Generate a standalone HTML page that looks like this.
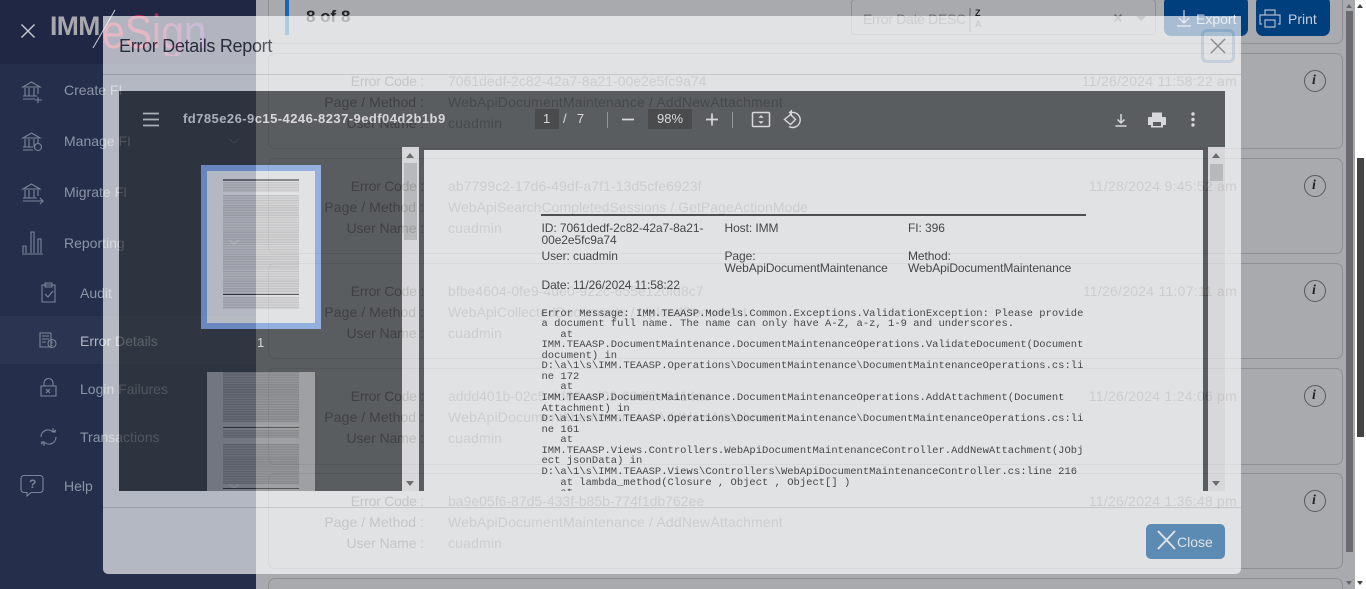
<!DOCTYPE html>
<html><head><meta charset="utf-8"><style>
*{box-sizing:border-box}
html,body{margin:0;padding:0;width:1366px;height:589px;overflow:hidden;background:#fff;font-family:"Liberation Sans",sans-serif}
#root{position:absolute;left:0;top:0;width:1366px;height:589px;overflow:hidden;background:#fff}
.a{position:absolute;white-space:nowrap}
#main{position:absolute;left:256px;top:0;width:1099px;height:589px;background:#a9aaae}
#side{position:absolute;left:0;top:0;width:256px;height:589px;background:#252f4c}
.card{position:absolute;left:268px;width:1075px;border:1px solid #8f9095;border-radius:7px;background:#a9aaae}
.st{font-size:14px;color:#8d94a6;line-height:16px}
.lb,.vl,.tm{position:absolute;font-size:14px;line-height:16px;white-space:nowrap}
.lb{right:942px;color:#56565a;text-align:right;letter-spacing:.05px}
.lb.e{letter-spacing:-.25px}
.lb.u{letter-spacing:-.1px}
.vl{left:448px;color:#6e6e72;letter-spacing:.17px}
.tm{right:129px;color:#6e6e72;letter-spacing:.25px}
#modal{position:absolute;left:103px;top:16px;width:1138px;height:558px;background:#fff;opacity:.66;border-radius:0 0 5px 5px;overflow:hidden}
#viewer{position:absolute;left:16px;top:75px;width:1106px;height:400px;background:#323639;overflow:hidden}
.tb{color:#f1f1f1;font-size:13px;line-height:16px;position:absolute;white-space:nowrap}
.sb{position:absolute;background:#f1f1f1;top:56px;width:17px;height:344px}
.sb i{position:absolute;left:2px;width:13px;background:#c1c1c1}
.up{position:absolute;left:4px;top:6px;width:0;height:0;border:4px solid transparent;border-top:0;border-bottom:5px solid #505050}
.dn{position:absolute;left:4px;bottom:5px;width:0;height:0;border:4px solid transparent;border-bottom:0;border-top:5px solid #505050}
.pg{position:absolute;background:#fff;left:305px;top:59px;width:779px;height:341px;overflow:hidden;color:#000}
.pgi{position:absolute;left:0;top:0;width:779px;height:341px;filter:blur(.3px)}
.hd{position:absolute;font-size:12px;line-height:11.5px;white-space:nowrap;color:#111;letter-spacing:-.08px}
pre{position:absolute;left:117.5px;top:158.500px;margin:0;font:10.5px/10.56px "Liberation Mono",monospace;color:#111}
.th{position:absolute;background:#fff;width:108px;height:152px;overflow:hidden}
.ln{position:absolute;left:16px;width:76px;background:repeating-linear-gradient(#d2d2d2 0 1.2px,#ececec 1.2px 2.45px)}
.ln.d{background:repeating-linear-gradient(#bbb 0 1.2px,#dedede 1.2px 2.45px)}
.rl{position:absolute;left:16px;width:76px;height:1px;background:#555}
svg{position:absolute;overflow:visible;fill:none}
</style></head><body><div id="root">
<div id="main"></div>
<div id="side"><div style="position:absolute;left:0;top:0;width:256px;height:64px;background:#1f2745"></div>
<div style="position:absolute;left:0;top:316px;width:256px;height:48px;background:#2b3551"></div></div>

<svg style="left:0;top:0" width="256" height="589" stroke="#7c8598" stroke-width="1.1">
<path d="M21.5 24.5l13 13M34.5 24.5l-13 13" stroke="#c9ccd4" stroke-width="1.4"/>
<path d="M23 87h17l-8.500-5zM25 88v8M29 88v8M34 88v8M38 88v6M23 96h14M23 99h12"/>
<path d="M38 97v6M35 100h7"/>
<path d="M23 138h17l-8.500-5zM25 139v8M29 139v8M34 139v8M38 139v4M23 147h10M23 150h10"/><circle cx="38" cy="147" r="3.500"/>
<path d="M23 189h17l-8.500-5zM25 190v8M29 190v8M34 190v8M38 190v6M23 198h14M23 201h14M37 201h6M40 198l3 3-3 3"/>
<path d="M22 254h21M23 253v-7h3v7M31 253v-21h3v21M38 253v-14h3v14"/>
<path d="M42 285h13v17H42zM45 283h7v4h-7zM45 294l3 3 5-6"/>
<path d="M40 333h11v14H40zM42 336h7M42 339h7M42 342h4"/><circle cx="52" cy="343.500" r="4"/><path d="M52 341.500v2M52 345v1"/>
<path d="M41 386h15v10H41zM44 386v-3a4.500 4.500 0 0 1 9 0v3M46 389l4 4M50 389l-4 4"/>
<path d="M41 437a7 7 0 0 1 12-5l3-2M56 437a7 7 0 0 1-12 5l-3 2M53 428v4h3M44 446v-4h-3"/>
<path d="M24 475.500h16a3 3 0 0 1 3 3v11a3 3 0 0 1-3 3H31l-4 3.500v-3.500h-3a3 3 0 0 1-3-3v-11a3 3 0 0 1 3-3z"/>
<path d="M229 139l5 4 5-4M229 240l5 4 5-4" stroke="#566079"/>
<path d="M93 48l22-38" stroke="#c9ccd4" stroke-width="1"/>
<path d="M229 484l5 4 5-4" stroke="#566079"/>
</svg>
<div class="a" style="left:29px;top:477px;font-size:12px;line-height:14px;font-weight:bold;color:#7c8598">?</div>
<div class="a" style="left:50px;top:10px;font-size:26.500px;font-weight:bold;line-height:32px;color:#a9a9ad;letter-spacing:-.6px">IMM</div>
<div class="a" style="left:102px;top:7.500px;font-size:47px;line-height:48px;transform:scaleX(.87);transform-origin:left top;background:linear-gradient(90deg,#b02c4c 0,#b02c4c 40%,#5a3c90 100%);-webkit-background-clip:text;background-clip:text;color:transparent">eSign</div>

<div class="a st" style="left:64px;top:82px">Create FI</div>
<div class="a st" style="left:64px;top:133px">Manage FI</div>
<div class="a st" style="left:64px;top:184px">Migrate FI</div>
<div class="a st" style="left:64px;top:235px">Reporting</div>
<div class="a st" style="left:80px;top:285px">Audit</div>
<div class="a st" style="left:80px;top:333px;color:#b3b7c4">Error Details</div>
<div class="a st" style="left:80px;top:381px">Login Failures</div>
<div class="a st" style="left:80px;top:429px">Transactions</div>
<div class="a st" style="left:64px;top:478px">Help</div>

<!-- toolbar -->
<div class="card" style="top:-8px;height:52px"></div>
<div class="a" style="left:285px;top:0;width:4px;height:35px;background:#1f62b5"></div>
<div class="a" style="left:306px;top:7px;font-size:17px;line-height:20px;font-weight:bold;color:#232326">8 of 8</div>
<div class="a" style="left:851px;top:-1px;width:305px;height:36px;border:1px solid #8f9095;border-radius:4px"></div>
<div class="a" style="left:863px;top:11px;font-size:14px;line-height:16px;color:#6e6e72;letter-spacing:-.3px">Error Date DESC</div>
<svg style="left:960px;top:5px" width="40" height="28" stroke="#6a6a6e"><path d="M10 3v24"/></svg>
<div class="a" style="left:975px;top:8px;font-size:9px;line-height:10px;color:#222;font-weight:bold">Z</div>
<div class="a" style="left:975px;top:19px;font-size:9px;line-height:10px;color:#666;font-weight:bold">A</div>
<svg style="left:1112px;top:12px" width="40" height="14" stroke="#66666a" stroke-width="1.6"><path d="M2.500 2.500l7 7M9.500 2.500l-7 7"/><path d="M24 4h10l-5 5z" fill="#66666a" stroke="none"/></svg>
<div class="a" style="left:1164px;top:-4px;width:84px;height:40px;background:#003f7d;border-radius:7px"></div>
<div class="a" style="left:1256px;top:-4px;width:74px;height:40px;background:#003f7d;border-radius:7px"></div>
<div class="a" style="left:1196px;top:11px;font-size:14px;line-height:16px;color:#c6cedb">Export</div>
<div class="a" style="left:1288px;top:11px;font-size:14px;line-height:16px;color:#c6cedb">Print</div>
<svg style="left:1176px;top:9px" width="170" height="20" stroke="#c6cedb" stroke-width="1.200">
<path d="M8 1v13M3 9l5 5 5-5M1 17h14"/>
<path d="M89 6V1h10v5M86 15h-2V6h20v9h-2M89 11h10v7H89z" stroke="#aebbd0"/>
</svg>

<!-- cards -->
<div class="card" style="top:53px;height:96px"></div>
<div class="card" style="top:158px;height:96px"></div>
<div class="card" style="top:263px;height:96px"></div>
<div class="card" style="top:368px;height:97px"></div>
<div class="card" style="top:473px;height:96px"></div>
<div class="card" style="top:578px;height:30px"></div>

<div class="lb e" style="top:73px">Error Code :</div><div class="lb" style="top:94px">Page / Method :</div><div class="lb u" style="top:115px">User Name :</div>
<div class="vl" style="top:73px;letter-spacing:0">7061dedf-2c82-42a7-8a21-00e2e5fc9a74</div><div class="vl" style="top:94px">WebApiDocumentMaintenance / AddNewAttachment</div><div class="vl" style="top:115px">cuadmin</div>
<div class="tm" style="top:73px">11/26/2024 11:58:22 am</div>

<div class="lb e" style="top:178px">Error Code :</div><div class="lb" style="top:199px">Page / Method :</div><div class="lb u" style="top:220px">User Name :</div>
<div class="vl" style="top:178px;letter-spacing:.08px">ab7799c2-17d6-49df-a7f1-13d5cfe6923f</div><div class="vl" style="top:199px;letter-spacing:.03px">WebApiSearchCompletedSessions / GetPageActionMode</div><div class="vl" style="top:220px">cuadmin</div>
<div class="tm" style="top:178px">11/28/2024 9:45:52 am</div>

<div class="lb e" style="top:283px">Error Code :</div><div class="lb" style="top:304px">Page / Method :</div><div class="lb u" style="top:325px">User Name :</div>
<div class="vl" style="top:283px;letter-spacing:.03px">bfbe4604-0fe9-4de0-922c-655e120fd8c7</div><div class="vl" style="top:304px;letter-spacing:.03px">WebApiCollectedDocuments / UploadDocument</div><div class="vl" style="top:325px">cuadmin</div>
<div class="tm" style="top:283px">11/26/2024 11:07:11 am</div>

<div class="lb e" style="top:388px">Error Code :</div><div class="lb" style="top:409px">Page / Method :</div><div class="lb u" style="top:430px">User Name :</div>
<div class="vl" style="top:388px;letter-spacing:0">addd401b-02c5-4d68-ad02-68df2e6a14ae</div><div class="vl" style="top:409px">WebApiDocumentMaintenance / AddNewAttachment</div><div class="vl" style="top:430px">cuadmin</div>
<div class="tm" style="top:388px">11/26/2024 1:24:06 pm</div>

<div class="lb e" style="top:493px">Error Code :</div><div class="lb" style="top:514px">Page / Method :</div><div class="lb u" style="top:535px">User Name :</div>
<div class="vl" style="top:493px;letter-spacing:0">ba9e05f6-87d5-433f-b85b-774f1db762ee</div><div class="vl" style="top:514px">WebApiDocumentMaintenance / AddNewAttachment</div><div class="vl" style="top:535px">cuadmin</div>
<div class="tm" style="top:493px">11/26/2024 1:36:48 pm</div>

<svg style="left:1300px;top:60px" width="30" height="480" stroke="#5a5a5e" stroke-width="1">
<circle cx="15" cy="21" r="10.500"/><circle cx="15" cy="126" r="10.500"/><circle cx="15" cy="231" r="10.500"/><circle cx="15" cy="336" r="10.500"/><circle cx="15" cy="441" r="10.500"/>
</svg>
<div class="a" style="left:1312px;top:73px;font:italic bold 14px/16px 'Liberation Serif',serif;color:#222">i</div>
<div class="a" style="left:1312px;top:178px;font:italic bold 14px/16px 'Liberation Serif',serif;color:#222">i</div>
<div class="a" style="left:1312px;top:283px;font:italic bold 14px/16px 'Liberation Serif',serif;color:#222">i</div>
<div class="a" style="left:1312px;top:388px;font:italic bold 14px/16px 'Liberation Serif',serif;color:#222">i</div>
<div class="a" style="left:1312px;top:493px;font:italic bold 14px/16px 'Liberation Serif',serif;color:#222">i</div>

<!-- inner scrollbar -->
<div class="a" style="left:1346px;top:11px;width:7px;height:541px;background:#6b6b6f"></div>
<div class="a" style="left:1346px;top:4px;border:3.500px solid transparent;border-top:0;border-bottom:4px solid #66666a"></div>
<div class="a" style="left:1346px;top:581px;border:3.500px solid transparent;border-bottom:0;border-top:4px solid #66666a"></div>
<!-- outer scrollbar -->
<div class="a" style="left:1355px;top:0;width:11px;height:589px;background:#fff"></div>
<div class="a" style="left:1357px;top:158px;width:7px;height:279px;background:#444"></div>
<div class="a" style="left:1357px;top:4px;border:3.500px solid transparent;border-top:0;border-bottom:4px solid #444"></div>
<div class="a" style="left:1357px;top:581px;border:3.500px solid transparent;border-bottom:0;border-top:4px solid #444"></div>

<div id="modal">
 <div class="a" style="left:16px;top:20px;font-size:18px;line-height:20px;color:#2c3038;letter-spacing:-.3px">Error Details Report</div>
 <div class="a" style="left:0;top:58px;width:1138px;height:1px;background:#d6d6d8"></div>
 <div class="a" style="left:0;top:491px;width:1138px;height:1px;background:#d6d6d8"></div>
 <div class="a" style="left:1098px;top:13px;width:34px;height:34px;border:3px solid #d3e3f3;border-radius:6px"></div>
 <svg style="left:1098px;top:13px" width="34" height="34" stroke="#808083" stroke-width="1.500"><path d="M10 10l14 14M24 10l-14 14"/></svg>

 <div id="viewer">
  <div class="pg"><div class="pgi">
   <div class="a" style="left:117px;top:64px;width:545px;height:1.500px;background:#222"></div>
   <div class="hd" style="left:117.500px;top:73px">ID: 7061dedf-2c82-42a7-8a21-<br>00e2e5fc9a74</div>
   <div class="hd" style="left:300.500px;top:73px">Host: IMM</div>
   <div class="hd" style="left:484px;top:73px">FI: 396</div>
   <div class="hd" style="left:117.500px;top:101px">User: cuadmin</div>
   <div class="hd" style="left:300.500px;top:101px">Page:<br>WebApiDocumentMaintenance</div>
   <div class="hd" style="left:484px;top:101px">Method:<br>WebApiDocumentMaintenance</div>
   <div class="hd" style="left:117.500px;top:130px">Date: 11/26/2024 11:58:22</div>
<pre>Error Message: IMM.TEAASP.Models.Common.Exceptions.ValidationException: Please provide
a document full name. The name can only have A-Z, a-z, 1-9 and underscores.
   at
IMM.TEAASP.DocumentMaintenance.DocumentMaintenanceOperations.ValidateDocument(Document
document) in
D:\a\1\s\IMM.TEAASP.Operations\DocumentMaintenance\DocumentMaintenanceOperations.cs:li
ne 172
   at
IMM.TEAASP.DocumentMaintenance.DocumentMaintenanceOperations.AddAttachment(Document
Attachment) in
D:\a\1\s\IMM.TEAASP.Operations\DocumentMaintenance\DocumentMaintenanceOperations.cs:li
ne 161
   at
IMM.TEAASP.Views.Controllers.WebApiDocumentMaintenanceController.AddNewAttachment(JObj
ect jsonData) in
D:\a\1\s\IMM.TEAASP.Views\Controllers\WebApiDocumentMaintenanceController.cs:line 216
   at lambda_method(Closure , Object , Object[] )
   at</pre>
  </div></div>
  <div class="a" style="left:82px;top:74px;width:120px;height:164px;background:#8ab4f8"></div>
  <div class="th" style="left:88px;top:80px">
   <div class="rl" style="top:8px;height:1.500px;background:#777"></div>
   <div class="ln" style="top:11px;height:10px;"></div>
   <div class="ln" style="top:24px;height:99px"></div>
   <div class="rl" style="top:123px;background:#333"></div>
   <div class="ln" style="top:126px;height:12px"></div>
  </div>
  <div class="a" style="left:138px;top:244px;font-size:13px;line-height:16px;color:#e8eaed">1</div>
  <div class="th" style="left:88px;top:281px;opacity:.5;height:130px">
   <div class="ln d" style="top:0;height:50px"></div>
   <div class="rl" style="top:55px;background:#222"></div>
   <div class="ln d" style="top:58px;height:8px"></div>
   <div class="ln d" style="top:72px;height:40px"></div>
   <div class="rl" style="top:116px;background:#222"></div>
  </div>
  <div class="sb" style="left:283px"><i style="top:16px;height:77px"></i><b class="up"></b><b class="dn"></b></div>
  <div class="sb" style="left:1089px"><i style="top:17px;height:17px"></i><b class="up"></b><b class="dn"></b></div>
  <svg style="left:0;top:0" width="1106" height="59" stroke="#f1f1f1">
   <path d="M24 22.500h16M24 28.500h16M24 34.500h16" stroke-width="1.700"/>
   <rect x="416" y="18" width="24" height="20" fill="#191b1c" stroke="none"/>
   <rect x="529" y="18" width="44" height="20" fill="#191b1c" stroke="none"/>
   <path d="M488.500 21v16M613.500 21v16" stroke="#8a8d90"/>
   <path d="M503 28.500h12M587 28.500h12M593 22.500v12" stroke-width="1.700"/>
   <rect x="633.500" y="21.500" width="17" height="14" rx="1" stroke-width="1.500"/>
   <path d="M640 26.500l2-2 2 2zM640 30.500l2 2 2-2z" fill="#f1f1f1" stroke-width=".6"/>
   <path d="M673 21.500a7.500 7.500 0 1 1-3 14" stroke-width="1.400"/><path d="M673 18.500v6l-3.500-3z" fill="#f1f1f1" stroke="none"/>
   <path d="M671.500 23.500l-6 5 6 5 5-5z" stroke-width="1.400"/>
   <path d="M1002 23v9M998.500 28.500l3.500 3.500 3.500-3.500M996.500 35h11" stroke-width="1.500"/>
   <path d="M1033 26v-4.500h10V26h-10zM1030 26h16a1 1 0 0 1 1 1v7h-3v2.500h-12V34h-3v-7a1 1 0 0 1 1-1z" fill="#f1f1f1" stroke="none"/>
   <rect x="1034" y="31" width="8" height="4" fill="#323639" stroke="none"/>
   <circle cx="1074" cy="23" r="1.700" fill="#f1f1f1" stroke="none"/><circle cx="1074" cy="28.500" r="1.700" fill="#f1f1f1" stroke="none"/><circle cx="1074" cy="34" r="1.700" fill="#f1f1f1" stroke="none"/>
  </svg>
  <div class="tb" style="left:64px;top:20px;font-weight:bold;letter-spacing:.45px">fd785e26-9c15-4246-8237-9edf04d2b1b9</div>
  <div class="tb" style="left:424px;top:20px">1</div>
  <div class="tb" style="left:444px;top:20px;letter-spacing:1px">/&nbsp; 7</div>
  <div class="tb" style="left:529px;top:20px;width:44px;text-align:center">98%</div>
 </div>

 <div class="a" style="left:1043px;top:508px;width:79px;height:35px;background:#337ab7;border-radius:5px"></div>
 <svg style="left:1054px;top:514px" width="20" height="20" stroke="#fff" stroke-width="2"><path d="M1 1l17 18M18 1L1 19"/></svg>
 <div class="a" style="left:1074px;top:518px;font-size:14px;line-height:16px;color:#fff">Close</div>
</div>
</div></body></html>
